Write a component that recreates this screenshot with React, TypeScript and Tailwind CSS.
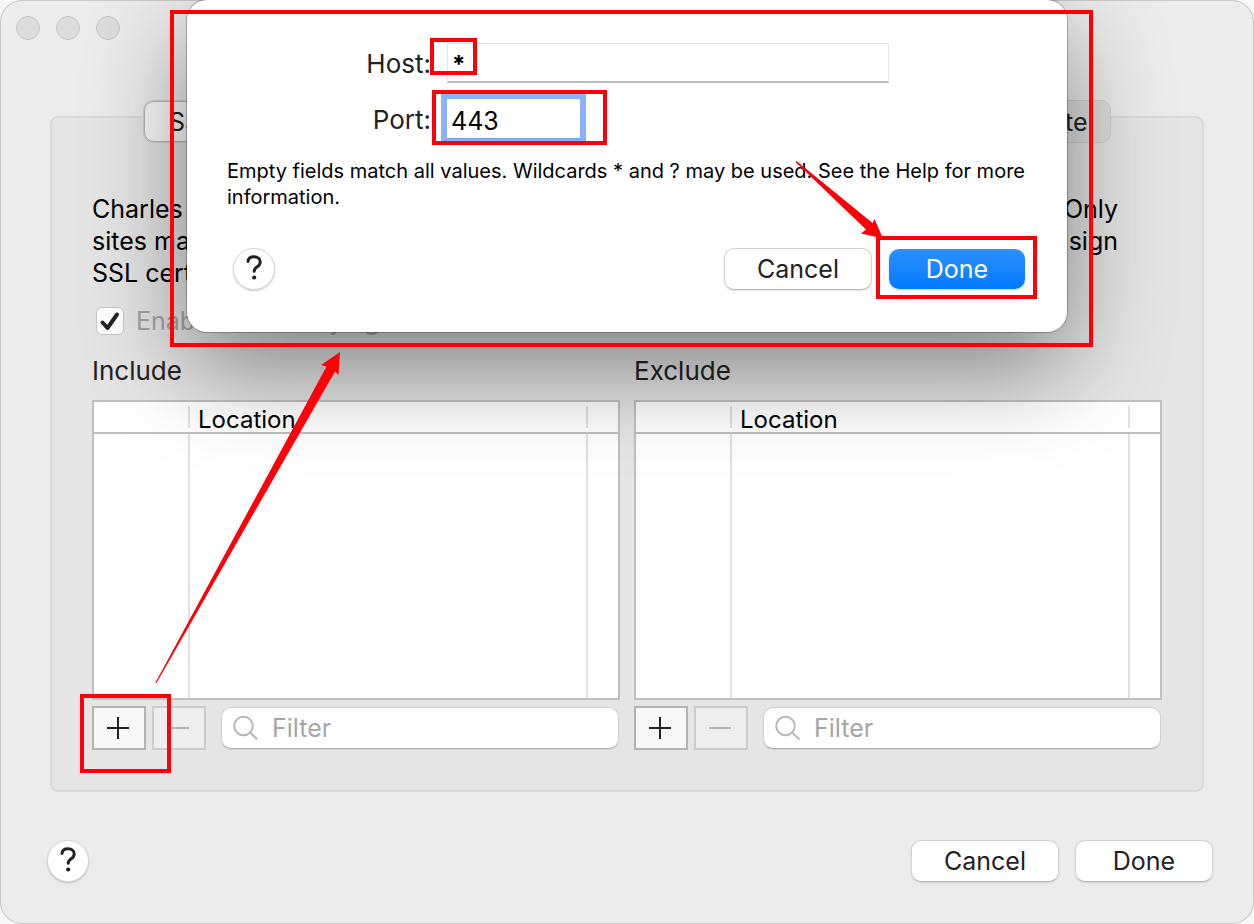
import { useState } from "react";

const tabs = ["SSL Proxying", "Server Certificates", "Client Certificates", "Root Certificate"];

const raised =
  "rounded-[10px] border border-[#d2d2d2] border-b-[#b9b9b9] bg-white pt-0.5 text-[#222] shadow-[0_1px_2px_rgba(0,0,0,0.12)]";

function HelpButton() {
  return (
    <button
      type="button"
      aria-label="Help"
      className="flex size-[42px] items-center justify-center rounded-full border border-[#d6d6d6] bg-white text-[#222] shadow-[0_1px_2px_rgba(0,0,0,0.2)]"
    >
      <svg viewBox="0 0 24 32" className="h-8 w-6" fill="none" stroke="currentColor" strokeWidth="3" strokeLinecap="round">
        <path d="M6 8.4C6.300 5.400 8.700 3.800 12 3.800c3.600 0 6.200 2 6.200 5.100 0 2.400-1.300 3.700-3.300 5-1.900 1.200-2.700 2.200-2.700 4.400" />
        <circle cx="12.200" cy="24.500" r="2.100" fill="currentColor" stroke="none" />
      </svg>
    </button>
  );
}

function LocationList({ title }: { title: string }) {
  const id = title.toLowerCase();
  return (
    <section className="flex min-w-0 flex-1 flex-col" aria-labelledby={id}>
      <h2 id={id} className="mb-[13px] text-[26px] leading-8 text-[#222]">
        {title}
      </h2>
      <table className="h-[300px] w-full table-fixed border-separate border-spacing-0 border-2 border-[#c0c0c0] bg-white">
        <colgroup>
          <col className="w-24" />
          <col />
          <col className="w-[30px]" />
        </colgroup>
        <thead>
          <tr className="h-8">
            <th className="border-b-2 border-[#c0c0c0] p-0">
              <div className="h-[22px] border-r-2 border-[#e0e0e0]" />
            </th>
            <th className="border-b-2 border-[#c0c0c0] p-0 text-left font-normal">
              <div className="h-[22px] border-r-2 border-[#e0e0e0] pl-2 text-2xl leading-7 text-black">Location</div>
            </th>
            <th className="border-b-2 border-[#c0c0c0] p-0" />
          </tr>
        </thead>
        <tbody>
          <tr>
            <td className="border-r-2 border-[#e0e0e0] p-0" />
            <td className="border-r-2 border-[#e0e0e0] p-0" />
            <td className="p-0" />
          </tr>
        </tbody>
      </table>
      <div className="mt-1.5 flex items-center">
        <button
          type="button"
          aria-label={`Add to ${title}`}
          className="flex h-11 w-[54px] items-center justify-center border-2 border-[#b3b3b3] bg-[#f8f8f8] text-[#222]"
        >
          <svg viewBox="0 0 24 24" className="size-6" stroke="currentColor" strokeWidth="2">
            <path d="M0 12h22M11 1v22" />
          </svg>
        </button>
        <button
          type="button"
          disabled
          aria-label={`Remove from ${title}`}
          className="ml-1.5 flex h-11 w-[54px] items-center justify-center border-2 border-[#cbcbcb] bg-[#eeeeee] text-[#b3b3b3]"
        >
          <svg viewBox="0 0 24 24" className="size-6" stroke="currentColor" strokeWidth="2">
            <path d="M0 12h22" />
          </svg>
        </button>
        <label className="mr-px ml-[15px] flex h-[42px] min-w-0 flex-1 items-center rounded-[10px] border border-[#d0d0d0] border-b-[#b0b0b0] bg-white pl-2.5 shadow-[0_1px_1px_rgba(0,0,0,0.1)]">
          <svg viewBox="0 0 28 28" className="size-7 shrink-0 text-[#b8b8b8]" fill="none" stroke="currentColor" strokeWidth="2">
            <circle cx="11.500" cy="12" r="9.300" />
            <path d="M18 18.500l7.500 7" />
          </svg>
          <input
            type="search"
            aria-label={`Filter ${title}`}
            placeholder="Filter"
            className="ml-3 min-w-0 flex-1 bg-transparent pt-0.5 outline-none placeholder:text-[#a6a6a6]"
          />
        </label>
      </div>
    </section>
  );
}

function LocationSheet() {
  const [host, setHost] = useState("*");
  const [port, setPort] = useState("443");
  return (
    <div
      role="dialog"
      aria-label="Edit location"
      className="absolute inset-x-0 top-0 mx-auto w-full max-w-[880px] rounded-[20px] bg-white pt-[43px] pr-[42px] pb-[42px] pl-10 shadow-[0_0_0_1px_rgba(0,0,0,0.25),0_34px_100px_rgba(0,0,0,0.45)]"
    >
      <div className="grid grid-cols-[204px_1fr] items-center gap-x-4 gap-y-4">
        <label htmlFor="host" className="pt-0.5 text-right text-[26px] leading-[38px] text-[#222]">
          Host:
        </label>
        <input
          id="host"
          value={host}
          onChange={(e) => setHost(e.target.value)}
          className="h-10 w-full max-w-[442px] border border-[#e6e6e6] border-b-2 border-b-[#bcbcbc] px-1 pt-1 text-2xl font-bold text-black outline-none"
        />
        <label htmlFor="port" className="pt-0.5 text-right text-[26px] leading-[38px] text-[#222]">
          Port:
        </label>
        <input
          id="port"
          value={port}
          onChange={(e) => setPort(e.target.value)}
          className="h-10 w-[133px] rounded-none border-b border-[#6f9cf0] bg-white px-1 pt-1 text-black shadow-[0_0_0_6px_#8ab1fb] outline-none"
        />
      </div>
      <p className="mt-[19px] text-xl leading-[26px] text-black">
        Empty fields match all values. Wildcards * and ? may be used. See the Help for more information.
      </p>
      <div className="mt-[38px] flex items-center justify-between">
        <div className="pl-1.5">
          <HelpButton />
        </div>
        <div className="flex items-center gap-[17px]">
          <button type="button" className={`h-[42px] w-[148px] ${raised}`}>
            Cancel
          </button>
          <button
            type="button"
            className="h-10 w-[136px] rounded-[10px] bg-linear-to-b from-[#2a90ff] to-[#007aff] pt-0.5 text-white shadow-[0_1px_2px_rgba(0,122,255,0.3)]"
          >
            Done
          </button>
        </div>
      </div>
    </div>
  );
}

const marks = [
  "left-[304px] top-[71px]",
  "left-[839px] top-[51px]",
  "left-[30px] top-[344px]",
  "left-[565px] top-[324px]",
  "left-[1101px] top-[308px]",
  "left-[286px] top-[603px]",
  "left-[821px] top-[581px]",
  "left-[2px] top-[874px]",
  "left-[538px] top-[855px]",
  "left-[1073px] top-[841px]",
];

function Watermark() {
  return (
    <div aria-hidden="true" className="pointer-events-none absolute inset-0 overflow-hidden text-[27px] leading-9 text-black/[0.015]">
      {marks.map((place) => (
        <div key={place} className={`absolute w-[190px] -rotate-45 ${place}`}>
          F8FEF719308
          <br />
          0560B93AF8
          <br />
          8597DE82FD
          <br />8
        </div>
      ))}
    </div>
  );
}

function Annotations() {
  return (
    <svg
      aria-hidden="true"
      viewBox="0 0 1254 924"
      className="pointer-events-none absolute top-0 left-1/2 h-[924px] w-[1254px] max-w-none -translate-x-1/2"
      fill="none"
      stroke="#ff0008"
      strokeWidth="4"
    >
      <rect x="172" y="12" width="919" height="333" />
      <rect x="432" y="40" width="43" height="33" />
      <rect x="434" y="92" width="171" height="51" />
      <rect x="878" y="238" width="157" height="59" />
      <rect x="82" y="696" width="87" height="75" />
      <g fill="#ff0008" stroke="none">
        <path d="M155.500 682.500L326.500 366.500l-5.500-1.500 19-13-1.500 23-3.500-3.500L156.500 683z" />
        <path d="M796.500 161L872.500 223l2-4 8.500 19.500-22-5 5-4L795.500 162z" />
      </g>
    </svg>
  );
}

export default function App() {
  const [tab, setTab] = useState(tabs[0]);
  const [enabled, setEnabled] = useState(true);
  return (
    <div className="relative min-h-screen overflow-hidden bg-[#f8f8f8] font-['Inter','Liberation_Sans',sans-serif] text-[25px]">
      <main className="relative min-h-screen overflow-hidden rounded-[22px] bg-[#ececec] shadow-[inset_0_0_0_1px_#c8c8c8]">
        <div className="flex gap-4 px-4 pt-4">
          {["Close", "Minimise", "Zoom"].map((name) => (
            <button key={name} type="button" aria-label={name} className="size-6 rounded-full border border-[#c4c4c4] bg-[#dcdcdc]" />
          ))}
        </div>

        <div className="px-[50px]">
          <div role="tablist" className="relative mx-auto mt-[60px] flex h-[43px] w-full max-w-[968px] rounded-[10px] border border-[#cfcfcf] bg-[#dedede]">
            {tabs.map((name) => (
              <button
                key={name}
                type="button"
                role="tab"
                aria-selected={tab === name}
                onClick={() => setTab(name)}
                className="flex-auto rounded-[10px] px-6 pt-0.5 whitespace-nowrap text-[#222] aria-selected:border aria-selected:border-[#b8b8b8] aria-selected:bg-[#fafafa]"
              >
                {name}
              </button>
            ))}
          </div>

          <div className="-mt-[27px] rounded-lg border-2 border-[#dadada] bg-[#e5e5e5] px-10 pt-[75px] pb-10">
            <p className="pr-11 leading-8 text-black">
              <span className="flex justify-between gap-2 whitespace-nowrap">
                <span>Charles can show you the plain text contents of SSL requests and responses.</span>
                <span>Only</span>
              </span>
              <span className="flex justify-between gap-2 whitespace-nowrap">
                <span>sites matching the locations listed below will be proxied. Charles will issue</span>
                <span>and sign</span>
              </span>
              <span className="block">SSL certificates, please press the Help button for more information.</span>
            </p>
            <label className="mt-4 flex items-center gap-3 pl-1 leading-8 text-[#a3a3a3]">
              <span className="relative flex size-7">
                <input
                  type="checkbox"
                  checked={enabled}
                  onChange={(e) => setEnabled(e.target.checked)}
                  className="peer size-7 appearance-none rounded-md border border-[#c8c8c8] bg-white"
                />
                <svg
                  viewBox="0 0 28 28"
                  className="pointer-events-none absolute inset-0 hidden peer-checked:block"
                  fill="none"
                  stroke="#222"
                  strokeWidth="4"
                  strokeLinecap="round"
                  strokeLinejoin="round"
                >
                  <path d="M6.500 15.500l5 5.500L21 7.500" />
                </svg>
              </span>
              Enable SSL Proxying
            </label>
            <div className="mt-[18px] flex gap-[14px]">
              <LocationList title="Include" />
              <LocationList title="Exclude" />
            </div>
          </div>
        </div>

        <div className="mt-12 flex items-center justify-between pr-[41px] pb-10 pl-[47px]">
          <HelpButton />
          <div className="flex gap-4">
            <button type="button" className={`h-[42px] w-[148px] ${raised}`}>
              Cancel
            </button>
            <button type="button" className={`h-[42px] w-[138px] ${raised}`}>
              Done
            </button>
          </div>
        </div>

        <LocationSheet />
        <Watermark />
      </main>
      <Annotations />
    </div>
  );
}
